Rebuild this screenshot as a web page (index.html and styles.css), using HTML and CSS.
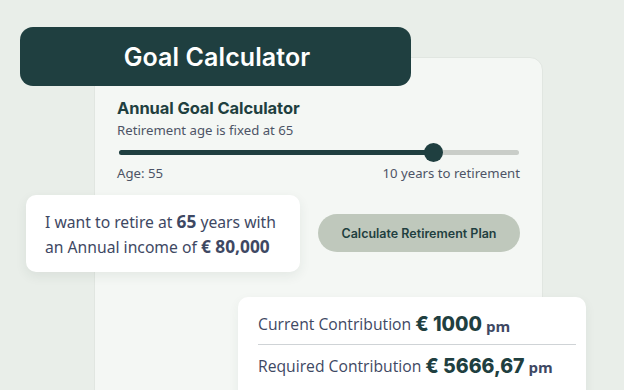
FILE: index.html
```html
<!DOCTYPE html>
<html>
<head>
<meta charset="utf-8">
<link rel="stylesheet" href="styles.css">
</head>
<body>
<div class="stage">
  <section class="panel">
    <h2 class="panel-title">Annual Goal Calculator</h2>
    <p class="panel-sub">Retirement age is fixed at 65</p>
    <div class="slider">
      <div class="track"><div class="fill" style="width:78.5%"></div><div class="knob" style="left:78.5%"></div></div>
    </div>
    <div class="slider-labels">
      <span>Age: 55</span>
      <span>10 years to retirement</span>
    </div>
    <div class="actions">
      <button class="cta">Calculate Retirement Plan</button>
    </div>
  </section>

  <div class="banner">Goal Calculator</div>

  <div class="quote">
    <p>I want to retire at <b>65</b> years with<br>an Annual income of <b>€ 80,000</b></p>
  </div>

  <div class="result">
    <div class="row">Current Contribution <strong>€ 1000</strong> <em>pm</em></div>
    <div class="row">Required Contribution <strong>€ 5666,67</strong> <em>pm</em></div>
  </div>
</div>
</body>
</html>
```

FILE: styles.css
```css
* { box-sizing: border-box; }
html, body { margin: 0; padding: 0; }
body {
  background: #e9eee9;
  font-family: "Open Sans", "Noto Sans", sans-serif;
}
.stage {
  position: relative;
  width: 624px;
  height: 390px;
  overflow: hidden;
  background: #e9eee9;
}
.panel {
  margin: 57px 0 0 94px;
  width: 449px;
  height: 360px;
  background: #f4f7f4;
  border: 1px solid #e1e6e1;
  border-radius: 13px;
  padding: 40px 22px 0 22px;
}
.panel-title {
  margin: 0;
  font-family: Inter, sans-serif;
  font-weight: 700;
  font-size: 16.5px;
  line-height: 20px;
  color: #1f3f40;
  letter-spacing: -0.1px;
}
.panel-sub {
  margin: 3px 0 0;
  font-family: "Noto Sans", sans-serif;
  font-size: 13.2px;
  line-height: 18px;
  color: #4d5466;
}
.slider {
  margin-top: 11px;
  padding: 0 1px 0 2px;
}
.track {
  position: relative;
  height: 5px;
  border-radius: 3px;
  background: #c9cdc8;
}
.fill {
  height: 5px;
  border-radius: 3px;
  background: #1f3f40;
}
.knob {
  position: absolute;
  top: 50%;
  width: 19px;
  height: 19px;
  margin: -9.5px 0 0 -9.5px;
  border-radius: 50%;
  background: #1f3f40;
}
.slider-labels {
  display: flex;
  justify-content: space-between;
  margin-top: 9px;
  font-family: "Noto Sans", sans-serif;
  font-size: 13.2px;
  line-height: 18px;
  color: #4d5466;
}
.actions {
  display: flex;
  justify-content: flex-end;
  margin-top: 32px;
}
.cta {
  width: 202px;
  height: 38px;
  border: none;
  border-radius: 19px;
  background: #bfc8bc;
  font-family: Inter, sans-serif;
  font-weight: 600;
  font-size: 12.5px;
  color: #1f3f40;
  padding: 0;
}
.banner {
  position: absolute;
  left: 20px;
  top: 27px;
  width: 391px;
  height: 59px;
  border-radius: 13px;
  background: #1f3f40;
  color: #ffffff;
  font-family: Inter, sans-serif;
  font-weight: 600;
  font-size: 25px;
  letter-spacing: 0.1px;
  display: flex;
  align-items: center;
  justify-content: center;
  padding-left: 3px;
}
.quote {
  position: absolute;
  left: 26px;
  top: 195px;
  width: 274px;
  height: 77px;
  background: #ffffff;
  border-radius: 10px;
  box-shadow: 0 4px 12px rgba(40, 60, 50, 0.08);
  padding: 15px 0 0 19px;
}
.quote p {
  margin: 0;
  font-family: "Noto Sans", sans-serif;
  font-size: 15.7px;
  line-height: 23.5px;
  color: #3e4863;
}
.quote b {
  font-weight: 700;
  font-size: 17.3px;
  color: #3e4863;
}
.result {
  position: absolute;
  left: 238px;
  top: 297px;
  width: 348px;
  height: 110px;
  background: #ffffff;
  border-radius: 10px;
  box-shadow: 0 4px 12px rgba(40, 60, 50, 0.06);
  padding: 0 10px 0 20px;
}
.row {
  height: 47px;
  display: flex;
  align-items: center;
  gap: 4px;
  font-family: "Open Sans", sans-serif;
  font-size: 15.7px;
  color: #3e4863;
  padding-top: 7px;
}
.row + .row {
  height: 42px;
  border-top: 1px solid #cfd3d6;
  padding-top: 0;
}
.row strong {
  font-family: Inter, sans-serif;
  font-weight: 800;
  font-size: 19.5px;
  color: #1f3f40;
}
.row em {
  font-style: normal;
  font-weight: 700;
  font-size: 15px;
  color: #3e4863;
  margin-top: 3px;
}
```
